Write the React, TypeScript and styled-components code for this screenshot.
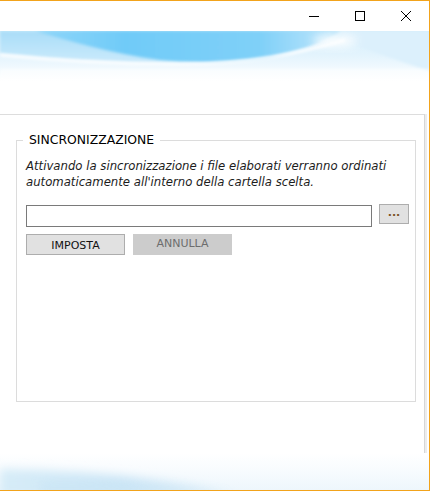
import styled, { createGlobalStyle } from 'styled-components';

const GlobalStyle = createGlobalStyle`
  html, body {
    margin: 0;
    padding: 0;
    background: #ffffff;
  }
  * {
    box-sizing: border-box;
  }
`;

const Window = styled.div`
  width: 430px;
  height: 491px;
  display: flex;
  flex-direction: column;
  border-top: 1px solid #f2a31b;
  border-right: 1px solid #f2a31b;
  border-bottom: 1px solid #f2a31b;
  background: #ffffff;
  font-family: 'DejaVu Sans', Verdana, sans-serif;
  overflow: hidden;
`;

const TitleBar = styled.div`
  height: 30px;
  flex: none;
  display: flex;
  justify-content: flex-end;
  align-items: stretch;
  background: #ffffff;
`;

const CaptionButton = styled.button`
  width: 46px;
  border: none;
  padding: 0;
  background: transparent;
  display: flex;
  align-items: center;
  justify-content: center;
  color: #000000;
`;

const Banner = styled.svg`
  display: block;
  flex: none;
`;

const Content = styled.div`
  flex: 1;
  display: flex;
  flex-direction: column;
  padding-top: 33px;
`;

const OuterPanel = styled.div`
  width: 425px;
  height: 339px;
  border-top: 1px solid #dddddd;
  border-right: 1px solid #d6d6d6;
  box-shadow: 2px 0 0 #ededed;
  padding-top: 18px;
`;

const GroupBox = styled.fieldset`
  margin: 0 0 0 16px;
  width: 400px;
  min-width: 0;
  height: 269px;
  padding: 0;
  border: 1px solid #dcdcdc;
`;

const GroupTitle = styled.legend`
  margin-left: 6px;
  padding: 0 6px;
  font-size: 12.4px;
  line-height: 14px;
  color: #000000;
`;

const GroupBody = styled.div`
  display: flex;
  flex-direction: column;
  padding: 11px 6px 0 9px;
`;

const Description = styled.p`
  margin: 0;
  font-size: 11.7px;
  font-style: italic;
  line-height: 16px;
  color: #1c1c1c;
`;

const PathRow = styled.div`
  display: flex;
  align-items: flex-start;
  gap: 7px;
  margin-top: 14px;
`;

const PathInput = styled.input`
  flex: none;
  width: 346px;
  height: 22px;
  border: 1px solid #7a7a7a;
  padding: 0 4px;
  font-family: inherit;
  font-size: 11px;
  outline: none;
  margin-top: 1px;
`;

const BrowseButton = styled.button`
  flex: none;
  width: 30px;
  height: 20px;
  border: 1px solid #adadad;
  background: #e1e1e1;
  padding: 0 0 5px 0;
  font-family: inherit;
  font-size: 11px;
  font-weight: bold;
  line-height: 1;
  color: #7a5326;
  display: flex;
  align-items: flex-end;
  justify-content: center;
`;

const ActionRow = styled.div`
  display: flex;
  gap: 8px;
  margin-top: 7px;
`;

const ActionButton = styled.button<{ $disabled?: boolean }>`
  width: 99px;
  height: 21px;
  border: 1px solid ${({ $disabled }) => ($disabled ? '#cccccc' : '#adadad')};
  background: ${({ $disabled }) => ($disabled ? '#cccccc' : '#e1e1e1')};
  color: ${({ $disabled }) => ($disabled ? '#6d6d6d' : '#111111')};
  font-family: inherit;
  font-size: 11px;
  font-weight: normal;
  padding: ${({ $disabled }) => ($disabled ? '0 0 3px 0' : '2px 0 0 0')};
  line-height: 1;
`;

const TopBanner = () => (
  <Banner width="429" height="50" viewBox="0 0 429 50">
    <defs>
      <linearGradient id="topFade" x1="0" y1="0" x2="0" y2="1">
        <stop offset="0" stopColor="#d3eefc" />
        <stop offset="0.5" stopColor="#e4f4fd" />
        <stop offset="1" stopColor="#ffffff" />
      </linearGradient>
      <linearGradient id="deepBlue" x1="0" y1="0" x2="1" y2="0">
        <stop offset="0" stopColor="#8fd6f9" />
        <stop offset="0.3" stopColor="#70cbf8" />
        <stop offset="0.75" stopColor="#7fd0f8" />
        <stop offset="1" stopColor="#bfe6fb" />
      </linearGradient>
      <linearGradient id="leftBlue" x1="0" y1="0" x2="0" y2="1">
        <stop offset="0" stopColor="#a9ddf8" />
        <stop offset="1" stopColor="#cbeafb" />
      </linearGradient>
      <filter id="soft" x="-10%" y="-50%" width="120%" height="200%">
        <feGaussianBlur stdDeviation="1.5" />
      </filter>
      <filter id="glow" x="-50%" y="-50%" width="200%" height="200%">
        <feGaussianBlur stdDeviation="5" />
      </filter>
    </defs>
    <rect width="429" height="50" fill="url(#topFade)" />
    <path d="M0 0 H340 C320 14 260 30 180 32 C110 32 50 27 0 22 Z" fill="url(#leftBlue)" filter="url(#soft)" />
    <path d="M35 0 H335 C325 10 300 20 270 26 C230 32 190 32 160 29 C110 22 70 10 35 0 Z" fill="url(#deepBlue)" filter="url(#soft)" />
    <path d="M340 0 H429 V40 C400 30 370 20 345 10 Z" fill="#dcf0fc" filter="url(#soft)" />
    <path d="M0 24 C60 30 120 33 180 33 C250 33 300 22 345 9" fill="none" stroke="#ffffff" strokeWidth="2.5" filter="url(#soft)" />
    <ellipse cx="335" cy="10" rx="22" ry="6" fill="#ffffff" opacity="0.9" filter="url(#glow)" />
    <rect y="38" width="429" height="12" fill="#ffffff" opacity="0.5" filter="url(#soft)" />
  </Banner>
);

const BottomBanner = () => (
  <Banner width="429" height="38" viewBox="0 0 429 38">
    <defs>
      <linearGradient id="bottomFade" x1="0" y1="0" x2="0" y2="1">
        <stop offset="0" stopColor="#ffffff" />
        <stop offset="0.5" stopColor="#f7fbfe" />
        <stop offset="1" stopColor="#edf6fc" />
      </linearGradient>
      <linearGradient id="bottomBlue" x1="0" y1="0" x2="1" y2="0">
        <stop offset="0" stopColor="#d6ecf8" />
        <stop offset="0.5" stopColor="#cde6f6" />
        <stop offset="1" stopColor="#edf6fc" />
      </linearGradient>
      <filter id="softBottom" x="-10%" y="-50%" width="120%" height="200%">
        <feGaussianBlur stdDeviation="5" />
      </filter>
    </defs>
    <rect width="429" height="38" fill="url(#bottomFade)" />
    <path d="M0 16 C80 18 170 24 250 44 H0 Z" fill="url(#bottomBlue)" filter="url(#softBottom)" />
    <path d="M40 30 C100 28 170 32 230 42 H40 Z" fill="#c8e4f5" opacity="0.6" filter="url(#softBottom)" />
  </Banner>
);

export default function App() {
  return (
    <>
      <GlobalStyle />
      <Window>
        <TitleBar>
          <CaptionButton aria-label="Riduci a icona">
            <svg width="10" height="10" viewBox="0 0 10 10">
              <path d="M0 5.5 H10" stroke="#000" strokeWidth="1" />
            </svg>
          </CaptionButton>
          <CaptionButton aria-label="Ingrandisci">
            <svg width="10" height="10" viewBox="0 0 10 10">
              <rect x="0.5" y="0.5" width="9" height="9" fill="none" stroke="#000" strokeWidth="1" />
            </svg>
          </CaptionButton>
          <CaptionButton aria-label="Chiudi">
            <svg width="10" height="10" viewBox="0 0 10 10">
              <path d="M0 0 L10 10 M10 0 L0 10" stroke="#000" strokeWidth="1" />
            </svg>
          </CaptionButton>
        </TitleBar>
        <TopBanner />
        <Content>
          <OuterPanel>
            <GroupBox>
              <GroupTitle>SINCRONIZZAZIONE</GroupTitle>
              <GroupBody>
                <Description>
                  Attivando la sincronizzazione i file elaborati verranno ordinati
                  <br />
                  automaticamente all'interno della cartella scelta.
                </Description>
                <PathRow>
                  <PathInput type="text" />
                  <BrowseButton type="button">...</BrowseButton>
                </PathRow>
                <ActionRow>
                  <ActionButton type="button">IMPOSTA</ActionButton>
                  <ActionButton type="button" $disabled disabled>
                    ANNULLA
                  </ActionButton>
                </ActionRow>
              </GroupBody>
            </GroupBox>
          </OuterPanel>
        </Content>
        <BottomBanner />
      </Window>
    </>
  );
}
